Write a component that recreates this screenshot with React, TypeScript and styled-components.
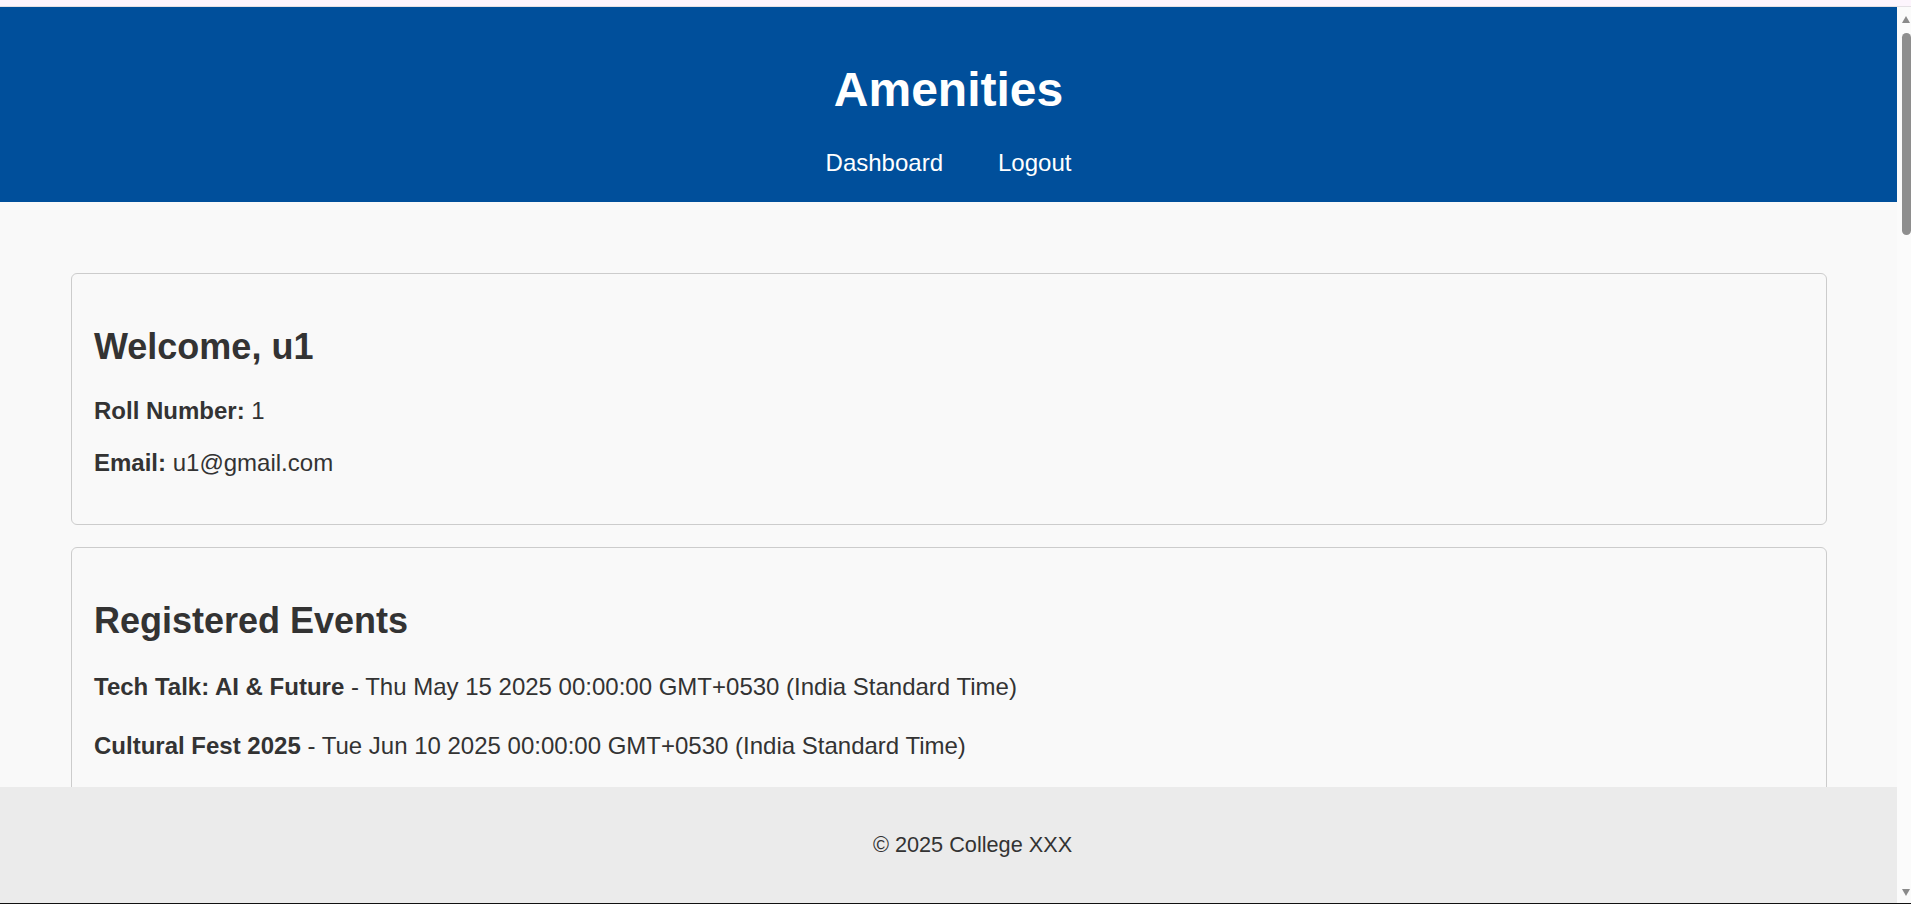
import styled, { createGlobalStyle } from "styled-components";

const GlobalStyle = createGlobalStyle`
  html {
    background: #fdf6fd;
    scrollbar-width: none;
  }
  html::-webkit-scrollbar {
    display: none;
  }
  body {
    margin: 0;
    background: #f9f9f9;
    color: #333;
    font-family: "Liberation Sans", Arial, sans-serif;
  }
`;

const events = [
  { title: "Tech Talk: AI & Future", date: "Thu May 15 2025 00:00:00 GMT+0530 (India Standard Time)" },
  { title: "Cultural Fest 2025", date: "Tue Jun 10 2025 00:00:00 GMT+0530 (India Standard Time)" },
];

const App = () => {
  return (
    <>
      <GlobalStyle />
      <StyledFrameTop />
      <StyledPage>
        <StyledHeader>
          <StyledTitle>Amenities</StyledTitle>
          <StyledNav>
            <StyledNavLink href="#">Dashboard</StyledNavLink>
            <StyledNavLink href="#">Logout</StyledNavLink>
          </StyledNav>
        </StyledHeader>

        <StyledMain>
          <StyledCard>
            <StyledCardTitle>Welcome, u1</StyledCardTitle>
            <StyledLine>
              <strong>Roll Number:</strong> 1
            </StyledLine>
            <StyledLine>
              <strong>Email:</strong> u1@gmail.com
            </StyledLine>
          </StyledCard>

          <StyledCard>
            <StyledCardTitle>Registered Events</StyledCardTitle>
            {events.map((ev) => (
              <StyledEvent key={ev.title}>
                <strong>{ev.title}</strong> - {ev.date}
              </StyledEvent>
            ))}
          </StyledCard>
        </StyledMain>
      </StyledPage>

      <StyledFooter>
        <StyledFooterText>© 2025 College XXX</StyledFooterText>
      </StyledFooter>

      <StyledScrollbar>
        <svg width="10" height="10" viewBox="0 0 10 10">
          <path d="M1 9 L5 2 L9 9 Z" fill="#8a8a8a" />
        </svg>
        <StyledThumb />
        <StyledSpacer />
        <svg width="10" height="10" viewBox="0 0 10 10">
          <path d="M1 1 L9 1 L5 8 Z" fill="#8a8a8a" />
        </svg>
      </StyledScrollbar>
      <StyledFrameBottom />
    </>
  );
};

export default App;

const StyledFrameTop = styled.div`
  height: 6px;
  background: #fdf5fd;
  border-bottom: 1px solid #e4e0e4;
`;

const StyledFrameBottom = styled.div`
  position: fixed;
  left: 0;
  right: 0;
  bottom: 0;
  height: 1px;
  background: #111;
  z-index: 5;
`;

const StyledPage = styled.div`
  margin-right: 14px;
  background: #f9f9f9;
`;

const StyledHeader = styled.header`
  background-color: #004f9b;
  color: #fff;
  text-align: center;
  padding: 23px 0 25px;
`;

const StyledTitle = styled.h1`
  font-size: 48px;
  font-weight: bold;
  margin: 32px 0;
`;

const StyledNav = styled.nav`
  display: flex;
  justify-content: center;
`;

const StyledNavLink = styled.a`
  color: #fff;
  text-decoration: none;
  font-size: 24px;
  margin: 0 27.5px;
`;

const StyledMain = styled.main`
  padding: 71px 70px 24px 71px;
`;

const StyledCard = styled.section`
  background: #f9f9f9;
  border: 1px solid #ccc;
  border-radius: 6px;
  padding: 0 22px;
  margin-bottom: 22px;

  &::before,
  &::after {
    content: "";
    display: block;
    height: 24px;
  }
  &::after {
    height: 23px;
  }
`;

const StyledCardTitle = styled.h2`
  font-size: 36px;
  font-weight: bold;
  margin: 28px 0 29px;
`;

const StyledLine = styled.p`
  font-size: 24px;
  margin: 24px 0;
`;

const StyledEvent = styled.p`
  font-size: 24px;
  margin: 31px 0;
`;

const StyledFooter = styled.footer`
  position: fixed;
  left: 0;
  bottom: 0;
  width: calc(100% - 14px);
  padding: 23px 24px 24px;
  background: #ebebeb;
  text-align: center;
  z-index: 2;
`;

const StyledFooterText = styled.p`
  font-size: 21.7px;
  margin: 22px 0;
`;

const StyledScrollbar = styled.div`
  position: fixed;
  top: 7px;
  right: 0;
  bottom: 0;
  width: 14px;
  background: #fbfbfb;
  display: flex;
  flex-direction: column;
  align-items: flex-end;
  padding: 7px 0 6px;
  box-sizing: border-box;
  z-index: 4;
`;

const StyledThumb = styled.div`
  width: 9px;
  height: 202px;
  margin-top: 9px;
  background: #8e8e8e;
  border-radius: 5px;
`;

const StyledSpacer = styled.div`
  flex: 1;
`;
